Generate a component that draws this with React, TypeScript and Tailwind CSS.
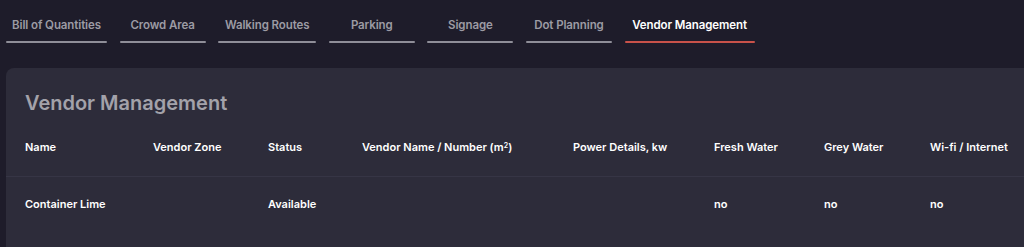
import React from 'react';

const tabs = [
  { name: 'Bill of Quantities', w: 'w-[101px]' },
  { name: 'Crowd Area', w: 'w-[86px]' },
  { name: 'Walking Routes', w: 'w-[98px]' },
  { name: 'Parking', w: 'w-[86px]' },
  { name: 'Signage', w: 'w-[86px]' },
  { name: 'Dot Planning', w: 'w-[86px]' },
  { name: 'Vendor Management', w: 'w-[130px]' },
];

const columns = [
  { label: 'Name', w: 'w-[128px]' },
  { label: 'Vendor Zone', w: 'w-[115px]' },
  { label: 'Status', w: 'w-[94px]' },
  { label: 'Vendor Name / Number', w: 'w-[211px]', sup: true },
  { label: 'Power Details, kw', w: 'w-[141px]' },
  { label: 'Fresh Water', w: 'w-[110px]' },
  { label: 'Grey Water', w: 'w-[106px]' },
  { label: 'Wi-fi / Internet', w: 'w-[100px]' },
];

const rows = [['Container Lime', '', 'Available', '', '', 'no', 'no', 'no']];

function App() {
  const active = 'Vendor Management';

  return (
    <div
      className="h-[247px] w-[1024px] overflow-hidden bg-[#1e1c2a] text-white"
      style={{ fontFamily: 'Inter, "Noto Sans", sans-serif' }}
    >
      {/* Tabs */}
      <div className="flex gap-[12.6px] pl-[6px] pt-[15px]">
        {tabs.map((t) => (
          <div
            key={t.name}
            className={`${t.w} flex h-[28px] flex-col items-center justify-between`}
          >
            <span
              className={`text-[11.5px] font-semibold tracking-[-0.1px] leading-[20px] ${
                t.name === active ? 'text-white' : 'text-[#9c9ba4]'
              }`}
            >
              {t.name}
            </span>
            <div
              className={`h-[2px] w-full rounded ${
                t.name === active ? 'bg-[#c9524a]' : 'bg-[#8f8e98]'
              }`}
            />
          </div>
        ))}
      </div>

      {/* Panel */}
      <div className="ml-[6px] mt-[25px] h-[200px] rounded-tl-[8px] bg-[#2d2c3a]">
        <h2 className="pl-[19px] pt-[21px] text-[20px] font-semibold leading-[28px] text-[#a3a2aa]">
          Vendor Management
        </h2>

        <div className="mt-[2px] flex h-[58px] items-center border-b border-[#363545] pl-[19px]">
          {columns.map((c) => (
            <div key={c.label} className={`${c.w} shrink-0 text-[11px] font-semibold`}>
              {c.label}
              {c.sup && (
                <>
                  {' '}(m<sup className="text-[7px]">2</sup>)
                </>
              )}
            </div>
          ))}
        </div>

        {rows.map((r, i) => (
          <div key={i} className="flex h-[55px] items-center pl-[19px]">
            {r.map((v, j) => (
              <div key={j} className={`${columns[j].w} shrink-0 text-[11px] font-semibold`}>
                {v}
              </div>
            ))}
          </div>
        ))}
      </div>
    </div>
  );
}

export default App;
